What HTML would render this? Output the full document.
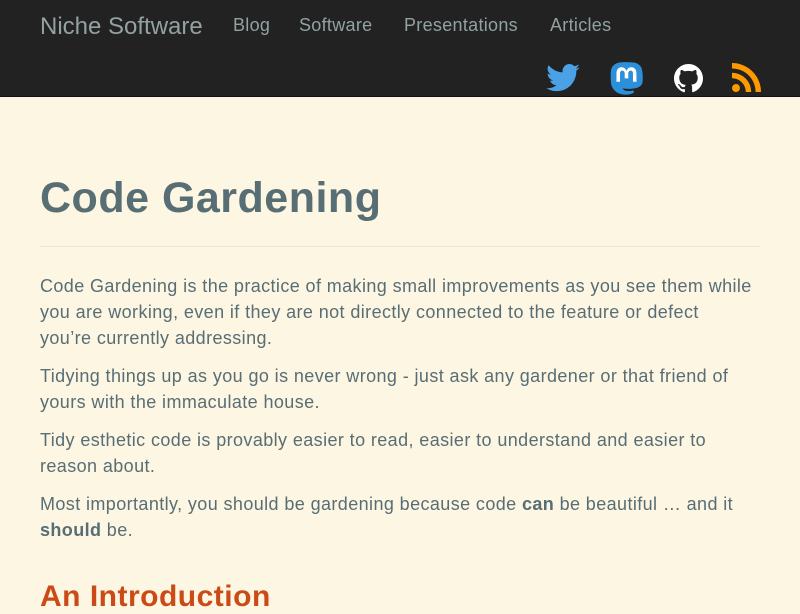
<!DOCTYPE html>
<html><head><meta charset="utf-8"><style>
*{margin:0;padding:0;box-sizing:border-box}
body{width:800px;height:600px;overflow:hidden;background:#fdf6e3;font-family:"Liberation Sans",sans-serif;color:#586e75}
.hdr{height:97px;background:#222;border-bottom:1px solid #111;position:relative}
.brand{position:absolute;left:40px;top:13px;font-size:24px;color:#93a1a1}
.nav{position:absolute;top:15px;font-size:18px;color:#93a1a1;letter-spacing:0.3px}
.icons svg{position:absolute}
h1{position:absolute;left:40px;top:174px;font-size:43px;font-weight:bold;color:#586e75;letter-spacing:0.5px}
hr{position:absolute;left:40px;top:246px;width:720px;border:0;border-top:1px solid #ece6d2}
.c{position:absolute;left:40px;top:273px;width:760px;font-size:18px;line-height:26px;letter-spacing:0.4px;white-space:nowrap}
.c p{margin-bottom:12px}
h2{position:absolute;left:40px;top:580px;font-size:30px;color:#cb4b16;font-weight:bold;letter-spacing:0.5px}
</style></head><body>
<div class="hdr">
<div class="brand">Niche Software</div>
<div class="nav" style="left:233px">Blog</div>
<div class="nav" style="left:299px">Software</div>
<div class="nav" style="left:404px">Presentations</div>
<div class="nav" style="left:550px">Articles</div>
<div class="icons">
<svg style="left:546px;top:64px" width="34" height="28" viewBox="0 0 24 20"><path fill="#4aa1e6" d="M24 2.4a9.8 9.8 0 0 1-2.8.8A4.9 4.9 0 0 0 23.3.4a9.9 9.9 0 0 1-3.1 1.2A4.9 4.9 0 0 0 11.8 6 14 14 0 0 1 1.7.9a4.9 4.9 0 0 0 1.5 6.6A4.9 4.9 0 0 1 1 6.9a4.9 4.9 0 0 0 3.9 4.8 4.9 4.9 0 0 1-2.2.1 4.9 4.9 0 0 0 4.6 3.4A9.9 9.9 0 0 1 0 17.2 14 14 0 0 0 7.5 19.4c9.1 0 14-7.5 14-14v-.6A10 10 0 0 0 24 2.4z"/></svg>
<svg style="left:610px;top:62px" width="33" height="36" viewBox="0 0 24 26"><path fill="#2b90d9" d="M23.3 5.8C23 3 20.5.8 17.7.4 17.2.3 15.3 0 11 0 7.8 0 7.1.3 6.6.4 3.9.8 1.4 2.7.8 5.5.5 6.9.5 8.4.5 9.8c0 2 .1 4 .3 6 .4 2.9 3 6.3 6.7 7.3 2.7.7 5.1.8 7.3.2.8-.2 1.8-.6 2.5-1l-.1-1.8c-1.3.4-2.9.6-4.4.5-2.6-.1-3.3-1.3-3.5-2 4.3 1 7.5.2 8.6.1 2.8-.3 5.3-2.1 5.6-3.8.6-2.7.3-7.9-.2-9.5z"/><path fill="#fff" d="M19.3 14.3h-2.6V8.2c0-1.3-.5-2-1.6-2-1.2 0-1.8.8-1.8 2.3v3.3h-2.6V8.5c0-1.5-.6-2.3-1.8-2.3-1.1 0-1.6.7-1.6 2v6.1H4.7V8c0-1.3.3-2.3 1-3.1.7-.8 1.6-1.2 2.7-1.2 1.3 0 2.3.5 2.9 1.5l.7 1.1.6-1.1c.6-1 1.6-1.5 2.9-1.5 1.1 0 2 .4 2.7 1.2.7.8 1 1.8 1 3.1z"/></svg>
<svg style="left:674px;top:64px" width="29" height="29" viewBox="0 0 16 16"><path fill="#fff" d="M8 0C3.6 0 0 3.6 0 8c0 3.5 2.3 6.5 5.5 7.6.4.1.5-.2.5-.4v-1.4c-2.2.5-2.7-1-2.7-1-.4-.9-.9-1.2-.9-1.2-.7-.5.1-.5.1-.5.8.1 1.2.8 1.2.8.7 1.2 1.9.9 2.3.7.1-.5.3-.9.5-1.1-1.8-.2-3.6-.9-3.6-4 0-.9.3-1.6.8-2.1-.1-.2-.4-1 .1-2.1 0 0 .7-.2 2.2.8.6-.2 1.3-.3 2-.3s1.4.1 2 .3c1.5-1 2.2-.8 2.2-.8.4 1.1.2 1.9.1 2.1.5.6.8 1.3.8 2.1 0 3.1-1.9 3.7-3.6 3.9.3.3.5.8.5 1.5v2.2c0 .2.1.5.6.4C13.7 14.5 16 11.5 16 8c0-4.4-3.6-8-8-8z"/></svg>
<svg style="left:732px;top:63px" width="29" height="29" viewBox="0 0 16 16"><g fill="#f90"><circle cx="2.2" cy="13.8" r="2.2"/><path d="M0 5.4v3a7.6 7.6 0 0 1 7.6 7.6h3A10.6 10.6 0 0 0 0 5.4z"/><path d="M0 0v3a13 13 0 0 1 13 13h3A16 16 0 0 0 0 0z"/></g></svg>
</div>
</div>
<h1>Code Gardening</h1>
<hr>
<div class="c">
<p>Code Gardening is the practice of making small improvements as you see them while<br>you are working, even if they are not directly connected to the feature or defect<br>you’re currently addressing.</p>
<p>Tidying things up as you go is never wrong - just ask any gardener or that friend of<br>yours with the immaculate house.</p>
<p>Tidy esthetic code is provably easier to read, easier to understand and easier to<br>reason about.</p>
<p>Most importantly, you should be gardening because code <b>can</b> be beautiful … and it<br><b>should</b> be.</p>
</div>
<h2>An Introduction</h2>
</body></html>
